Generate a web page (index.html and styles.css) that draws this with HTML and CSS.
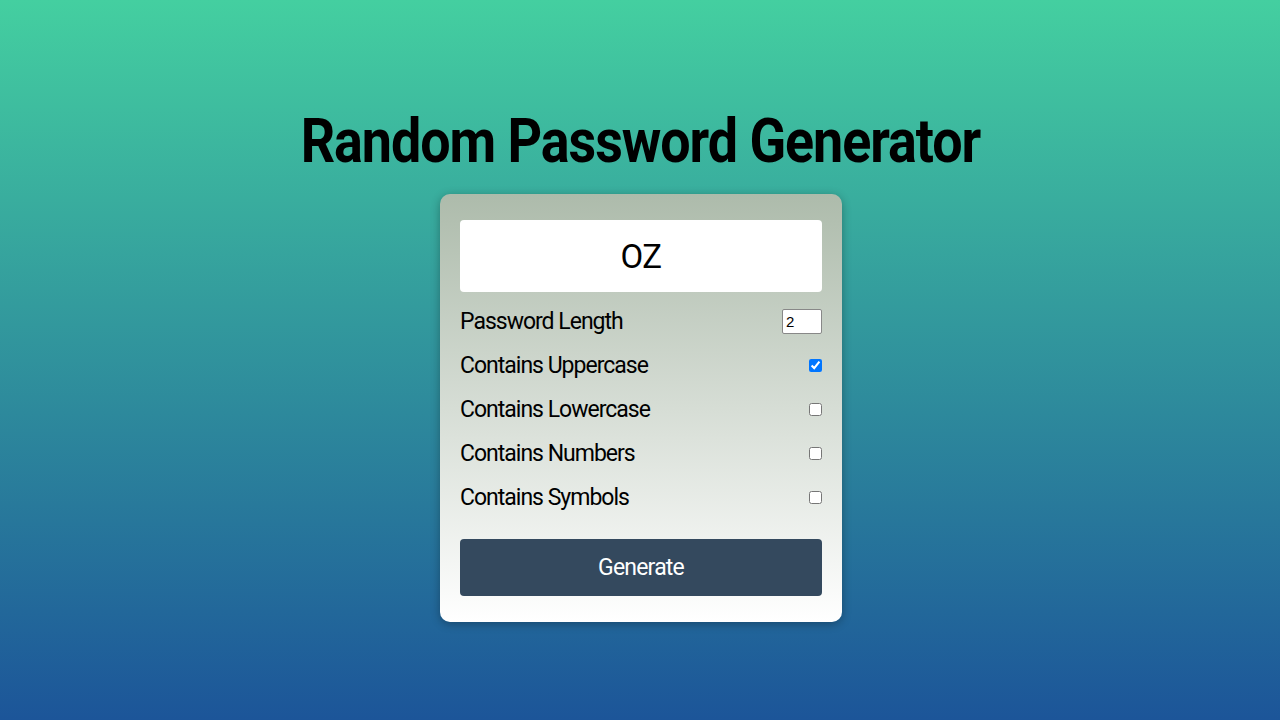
FILE: index.html
```html
<!DOCTYPE html>
<html lang="en">
<head>
<meta charset="utf-8">
<title>Random Password Generator</title>
<link rel="stylesheet" href="styles.css">
</head>
<body>
<main class="page">
  <h1 class="title">Random Password Generator</h1>
  <section class="card">
    <div class="result">OZ</div>
    <div class="row">
      <label for="len">Password Length</label>
      <input class="num" type="number" id="len" value="2">
    </div>
    <div class="row">
      <label for="up">Contains Uppercase</label>
      <input class="chk" type="checkbox" id="up" checked>
    </div>
    <div class="row">
      <label for="low">Contains Lowercase</label>
      <input class="chk" type="checkbox" id="low">
    </div>
    <div class="row">
      <label for="numb">Contains Numbers</label>
      <input class="chk" type="checkbox" id="numb">
    </div>
    <div class="row">
      <label for="sym">Contains Symbols</label>
      <input class="chk" type="checkbox" id="sym">
    </div>
    <button class="btn" type="button">Generate</button>
  </section>
</main>
</body>
</html>
```

FILE: styles.css
```css
* { box-sizing: border-box; }
html, body { height: 100%; }
body {
  margin: 0;
  font-family: "Roboto", "Liberation Sans", sans-serif;
  background: linear-gradient(180deg, #44cfa0 0%, #1c5599 100%);
  color: #000;
}
.page {
  height: 720px;
  display: flex;
  flex-direction: column;
  align-items: center;
  padding-top: 103px;
}
.title {
  margin: 0 0 15px;
  font-size: 62px;
  font-weight: 700;
  line-height: 76px;
  letter-spacing: -1.2px;
  transform: scaleX(0.868);
}
.card {
  width: 402px;
  margin-left: 2px;
  padding: 26px 20px 26px;
  border-radius: 10px;
  background: linear-gradient(180deg, #adbbab 0%, #ffffff 100%);
  box-shadow: 0 2px 10px rgba(0,0,0,0.3);
  display: flex;
  flex-direction: column;
}
.result {
  height: 72px;
  background: #fff;
  border-radius: 4px;
  display: flex;
  align-items: center;
  justify-content: center;
  font-size: 33px;
  letter-spacing: -0.5px;
  margin-bottom: 7px;
}
.row {
  height: 44px;
  display: flex;
  align-items: center;
  justify-content: space-between;
  font-size: 23px;
  letter-spacing: -1px;
}
.num {
  width: 40px;
  height: 25px;
  margin: 0;
  padding: 1px 3px;
  font-family: "Liberation Sans", sans-serif;
  font-size: 15px;
  letter-spacing: 0;
  border: 1px solid #888;
  border-radius: 2px;
  background: #fff;
}
.chk {
  width: 13px;
  height: 13px;
  margin: 0;
}
.btn {
  margin-top: 20px;
  height: 57px;
  border: none;
  border-radius: 4px;
  background: #34495e;
  color: #fff;
  font-family: inherit;
  font-size: 23px;
  letter-spacing: -0.8px;
}
```
